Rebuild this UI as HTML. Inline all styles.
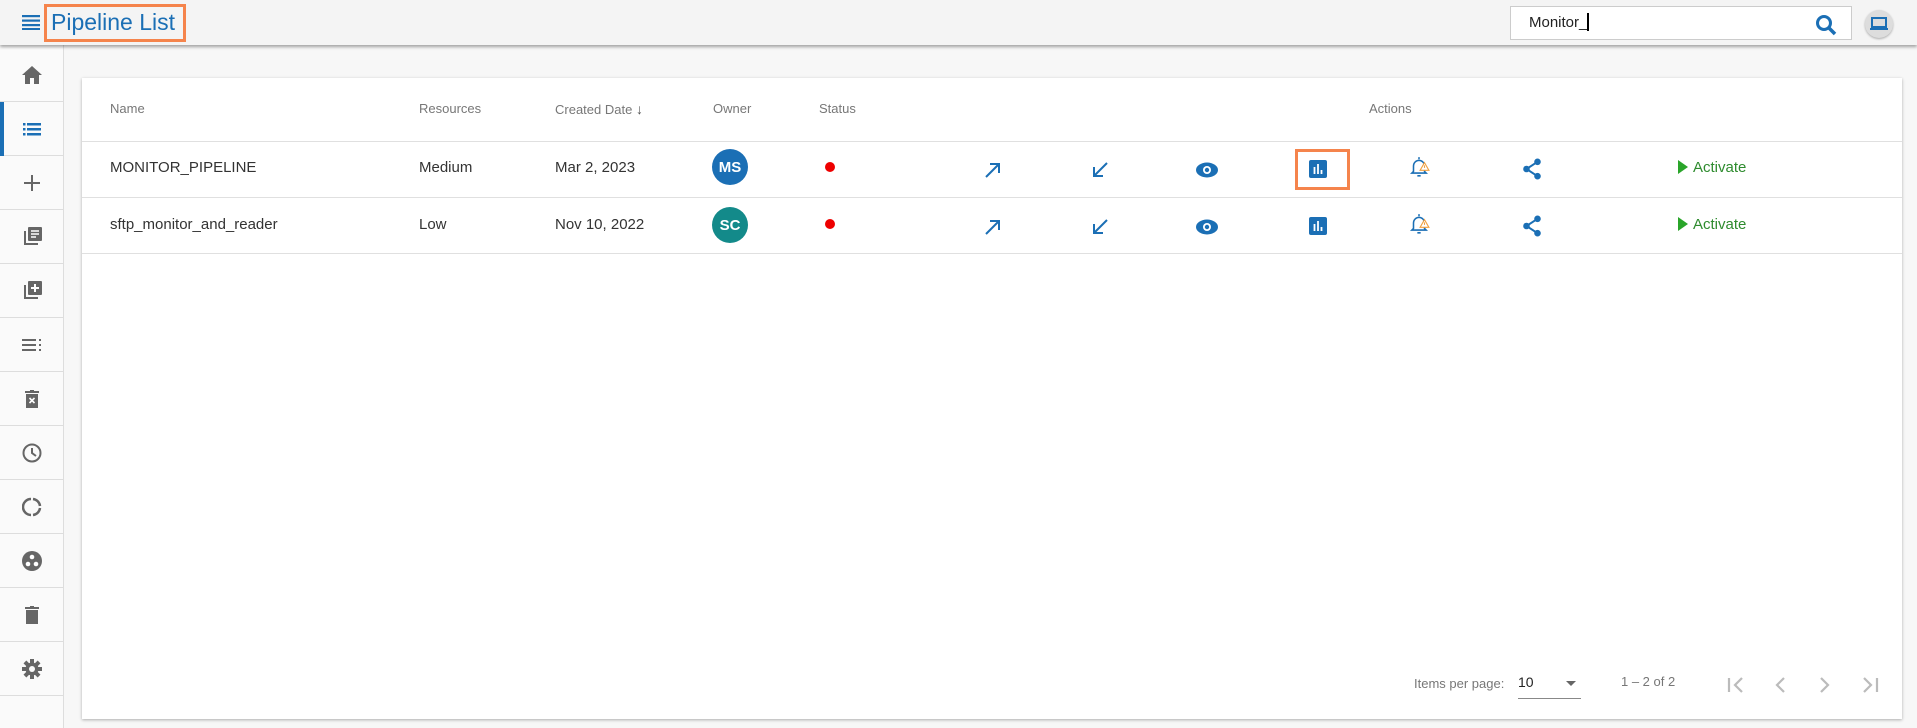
<!DOCTYPE html>
<html><head><meta charset="utf-8"><style>
*{box-sizing:border-box;margin:0;padding:0}
body{width:1917px;height:728px;background:#f7f7f7;font-family:"Liberation Sans",sans-serif;position:relative;overflow:hidden;color:#333}
.hdr{position:absolute;left:0;top:0;width:1917px;height:45px;background:#f4f4f4;box-shadow:0 2px 3px rgba(0,0,0,.35);z-index:2}
.side{position:absolute;left:0;top:45px;width:64px;height:683px;background:#fafafa;border-right:1px solid #ddd}
.si{position:absolute;left:0;width:64px;height:54px;border-bottom:1px solid #ddd;display:flex;align-items:center;justify-content:center}
.card{position:absolute;left:82px;top:78px;width:1820px;height:641px;background:#fff;box-shadow:0 1px 3px rgba(0,0,0,.3)}
.t{position:absolute;white-space:nowrap}
.hl{font-size:13px;color:#777}
.rw{font-size:15px;color:#333}
.line{position:absolute;left:0;width:1820px;height:1px;background:#e0e0e0}
.av{position:absolute;width:36px;height:36px;border-radius:50%;color:#fff;font-weight:bold;font-size:15px;display:flex;align-items:center;justify-content:center}
.dot{position:absolute;width:10px;height:10px;border-radius:50%;background:#e00}
.ic{position:absolute;transform:translate(-50%,-50%)}
</style></head><body>
<div class="hdr">
 <svg style="position:absolute;left:22px;top:14px" width="18" height="16" viewBox="0 0 18 16"><rect y="1" width="18" height="2.2" fill="#1b6fb5"/><rect y="5.5" width="18" height="2.2" fill="#1b6fb5"/><rect y="10" width="18" height="2.2" fill="#1b6fb5"/><rect y="14" width="18" height="2" fill="#1b6fb5"/></svg>
 <div style="position:absolute;left:44px;top:4px;width:142px;height:38px;border:3px solid #f5844c"></div>
 <div class="t" style="left:51px;top:9px;font-size:23px;color:#1b6fb5">Pipeline List</div>
 <div style="position:absolute;left:1510px;top:6px;width:342px;height:34px;background:#fff;border:1px solid #ccc"></div>
 <div class="t" style="left:1529px;top:13px;font-size:15px;color:#222">Monitor_<span style="display:inline-block;width:2px;height:18px;background:#000;vertical-align:-4px"></span></div>
 <svg style="position:absolute;left:1815px;top:14px" width="22" height="22" viewBox="0 0 22 22"><circle cx="9" cy="9" r="6.5" fill="none" stroke="#1b6fb5" stroke-width="3"/><path d="M14 14l6 6" stroke="#1b6fb5" stroke-width="3.5"/></svg>
 <div style="position:absolute;left:1865px;top:10px;width:28px;height:28px;border-radius:50%;background:#ddd;box-shadow:0 1px 2px rgba(0,0,0,.3)"></div>
 <svg style="position:absolute;left:1869px;top:16px" width="20" height="16" viewBox="0 0 20 16"><rect x="3" y="2" width="14" height="9" fill="none" stroke="#1b6fb5" stroke-width="2"/><rect x="1" y="12" width="18" height="2" fill="#1b6fb5"/></svg>
</div>
<div class="side">
 <div class="si" style="top:3px"><svg width="20" height="18" viewBox="0 0 20 18"><path d="M10 0L0 9h3v9h5v-6h4v6h5V9h3z" fill="#666"/></svg></div>
 <div class="si" style="top:57px"><div style="position:absolute;left:0;top:0;width:4px;height:54px;background:#1b6fb5"></div><svg width="18" height="14" viewBox="0 0 18 14"><g fill="#1b6fb5"><rect x="0" y="1" width="2.5" height="2.5"/><rect x="4" y="1" width="14" height="2.5"/><rect x="0" y="6" width="2.5" height="2.5"/><rect x="4" y="6" width="14" height="2.5"/><rect x="0" y="11" width="2.5" height="2.5"/><rect x="4" y="11" width="14" height="2.5"/></g></svg></div>
 <div class="si" style="top:111px"><svg width="16" height="16"><path d="M8 0v16M0 8h16" stroke="#666" stroke-width="2"/></svg></div>
 <div class="si" style="top:165px"><svg width="20" height="20" viewBox="0 0 20 20"><path d="M2 4v14h14v-2H4V4z" fill="#666"/><rect x="6" y="0" width="14" height="14" rx="1" fill="#666"/><path d="M9 4h8M9 7h8M9 10h5" stroke="#fff" stroke-width="1.5"/></svg></div>
 <div class="si" style="top:219px"><svg width="20" height="20" viewBox="0 0 20 20"><path d="M2 4v14h14v-2H4V4z" fill="#666"/><rect x="6" y="0" width="14" height="14" rx="1" fill="#666"/><path d="M13 3v8M9 7h8" stroke="#fff" stroke-width="2"/></svg></div>
 <div class="si" style="top:273px"><svg width="20" height="12" viewBox="0 0 20 12"><g fill="#666"><rect y="0" width="14" height="2"/><rect y="5" width="14" height="2"/><rect y="10" width="14" height="2"/><rect x="17" y="0" width="2" height="2"/><rect x="17" y="5" width="2" height="2"/><rect x="17" y="10" width="2" height="2"/></g></svg></div>
 <div class="si" style="top:327px"><svg width="14" height="18" viewBox="0 0 14 18"><rect x="0" y="1" width="14" height="2" fill="#666"/><rect x="5" y="0" width="4" height="2" fill="#666"/><rect x="1" y="4" width="12" height="14" fill="#666"/><path d="M4.5 8l5 5M9.5 8l-5 5" stroke="#fff" stroke-width="1.6"/></svg></div>
 <div class="si" style="top:381px"><svg width="20" height="20" viewBox="0 0 20 20"><circle cx="10" cy="10" r="8.5" fill="none" stroke="#666" stroke-width="2"/><path d="M10 5v5l4 3" fill="none" stroke="#666" stroke-width="2"/></svg></div>
 <div class="si" style="top:435px"><svg width="20" height="20" viewBox="0 0 20 20"><path d="M11 2a8 8 0 0 1 7 7M18 11a8 8 0 0 1-7 7M9 18a8 8 0 0 1 0-16" fill="none" stroke="#666" stroke-width="2.5"/></svg></div>
 <div class="si" style="top:489px"><svg width="20" height="20" viewBox="0 0 20 20"><circle cx="10" cy="10" r="10" fill="#666"/><circle cx="10" cy="6" r="2.3" fill="#fff"/><circle cx="6" cy="13" r="2.3" fill="#fff"/><circle cx="14" cy="13" r="2.3" fill="#fff"/></svg></div>
 <div class="si" style="top:543px"><svg width="14" height="18" viewBox="0 0 14 18"><rect x="0" y="1" width="14" height="2" fill="#666"/><rect x="5" y="0" width="4" height="2" fill="#666"/><rect x="1" y="4" width="12" height="14" fill="#666"/></svg></div>
 <div class="si" style="top:597px"><svg width="20" height="20" viewBox="0 0 20 20"><g fill="#666"><circle cx="10" cy="10" r="6.5"/><rect x="8" y="0" width="4" height="20"/><rect x="0" y="8" width="20" height="4"/><rect x="8" y="0" width="4" height="20" transform="rotate(45 10 10)"/><rect x="8" y="0" width="4" height="20" transform="rotate(-45 10 10)"/></g><circle cx="10" cy="10" r="3" fill="#fafafa"/></svg></div>
</div>
<div class="card">
 <div class="t hl" style="left:28px;top:23px">Name</div>
 <div class="t hl" style="left:337px;top:23px">Resources</div>
 <div class="t hl" style="left:473px;top:23px">Created Date <span style="font-size:14px;color:#555">&#8595;</span></div>
 <div class="t hl" style="left:631px;top:23px">Owner</div>
 <div class="t hl" style="left:737px;top:23px">Status</div>
 <div class="t hl" style="left:1287px;top:23px">Actions</div>
 <div class="line" style="top:63px"></div>
 <div class="line" style="top:119px"></div>
 <div class="line" style="top:175px"></div>
 <div class="t rw" style="left:28px;top:81px">MONITOR_PIPELINE</div>
 <div class="t rw" style="left:337px;top:81px">Medium</div>
 <div class="t rw" style="left:473px;top:81px">Mar 2, 2023</div>
 <div class="av" style="left:630px;top:71px;background:#1b6fb5">MS</div>
 <div class="dot" style="left:743px;top:84px"></div>
 <div class="t rw" style="left:28px;top:138px">sftp_monitor_and_reader</div>
 <div class="t rw" style="left:337px;top:138px">Low</div>
 <div class="t rw" style="left:473px;top:138px">Nov 10, 2022</div>
 <div class="av" style="left:630px;top:129px;background:#138a8a">SC</div>
 <div class="dot" style="left:743px;top:141px"></div>
 <div style="position:absolute;left:1213px;top:71px;width:55px;height:41px;border:3px solid #f5844c"></div>
 <div class="t" style="left:1332px;top:598px;font-size:13px;color:#777">Items per page:</div>
 <div class="t" style="left:1436px;top:596px;font-size:14px;color:#222">10</div>
 <div style="position:absolute;left:1436px;top:620px;width:63px;height:1px;background:#888"></div>
 <div style="position:absolute;left:1484px;top:603px;border-left:5px solid transparent;border-right:5px solid transparent;border-top:5px solid #666"></div>
 <div class="t" style="left:1539px;top:596px;font-size:13px;color:#777">1 – 2 of 2</div>
 <svg style="position:absolute;left:1645px;top:597px" width="200" height="20" viewBox="0 0 200 20"><g fill="none" stroke="#bbb" stroke-width="2.2"><path d="M2 3v14M15 3l-7 7 7 7"/><path d="M57 3l-7 7 7 7"/><path d="M94 3l7 7-7 7"/><path d="M137 3l7 7-7 7M150 3v14"/></g></svg>
</div>
<svg width="0" height="0" style="position:absolute"><defs>
 <g id="a1"><path d="M3 17L16 4M7 4h9v9" fill="none" stroke="#1b6fb5" stroke-width="2"/></g>
 <g id="a2"><path d="M17 3L4 16M4 7v9h9" fill="none" stroke="#1b6fb5" stroke-width="2"/></g>
 <g id="ey"><ellipse cx="10" cy="10" rx="11" ry="7.5" fill="#1b6fb5"/><circle cx="10" cy="10" r="4" fill="#fff"/><circle cx="10" cy="10" r="2.2" fill="#1b6fb5"/></g>
 <g id="ch"><rect x="1" y="1" width="18" height="18" rx="2" fill="#1b6fb5"/><path d="M6.5 8v7M10 5v10M13.5 11v4" stroke="#fff" stroke-width="1.8"/></g>
 <g id="bl"><path d="M10 1v2M5 14V9a5 5 0 0 1 10 0v5l1.5 1.5h-13z" fill="none" stroke="#1b6fb5" stroke-width="1.4"/><path d="M8.5 18h3" stroke="#1b6fb5" stroke-width="1.5"/><path d="M15 6l4 7h-8z" fill="#fff" stroke="#f0a040" stroke-width="1"/><path d="M15 8.5v2.3" stroke="#f0a040" stroke-width="1"/></g>
 <g id="sh"><circle cx="15" cy="3.5" r="3" fill="#1b6fb5"/><circle cx="5" cy="10" r="3" fill="#1b6fb5"/><circle cx="15" cy="16.5" r="3" fill="#1b6fb5"/><path d="M15 3.5L5 10l10 6.5" fill="none" stroke="#1b6fb5" stroke-width="1.8"/></g>
</defs></svg>
<svg class="ic" style="left:993px;top:170px" width="20" height="20" viewBox="0 0 20 20"><use href="#a1"/></svg>
<svg class="ic" style="left:1100px;top:170px" width="20" height="20" viewBox="0 0 20 20"><use href="#a2"/></svg>
<svg class="ic" style="left:1207px;top:170px" width="24" height="20" viewBox="-2 0 24 20"><use href="#ey"/></svg>
<svg class="ic" style="left:1318px;top:169px" width="20" height="20" viewBox="0 0 20 20"><use href="#ch"/></svg>
<svg class="ic" style="left:1419px;top:167px" width="22" height="22" viewBox="0 0 20 20"><use href="#bl"/></svg>
<svg class="ic" style="left:1532px;top:169px" width="22" height="22" viewBox="0 0 20 20"><use href="#sh"/></svg>
<div class="t" style="left:1678px;top:159px;font-size:15px;color:#2e8b2e"><span style="display:inline-block;width:0;height:0;border-top:7px solid transparent;border-bottom:7px solid transparent;border-left:10px solid #2aa52a;vertical-align:-2px;margin-right:5px"></span>Activate</div>
<svg class="ic" style="left:993px;top:227px" width="20" height="20" viewBox="0 0 20 20"><use href="#a1"/></svg>
<svg class="ic" style="left:1100px;top:227px" width="20" height="20" viewBox="0 0 20 20"><use href="#a2"/></svg>
<svg class="ic" style="left:1207px;top:227px" width="24" height="20" viewBox="-2 0 24 20"><use href="#ey"/></svg>
<svg class="ic" style="left:1318px;top:226px" width="20" height="20" viewBox="0 0 20 20"><use href="#ch"/></svg>
<svg class="ic" style="left:1419px;top:224px" width="22" height="22" viewBox="0 0 20 20"><use href="#bl"/></svg>
<svg class="ic" style="left:1532px;top:226px" width="22" height="22" viewBox="0 0 20 20"><use href="#sh"/></svg>
<div class="t" style="left:1678px;top:216px;font-size:15px;color:#2e8b2e"><span style="display:inline-block;width:0;height:0;border-top:7px solid transparent;border-bottom:7px solid transparent;border-left:10px solid #2aa52a;vertical-align:-2px;margin-right:5px"></span>Activate</div>
</body></html>
